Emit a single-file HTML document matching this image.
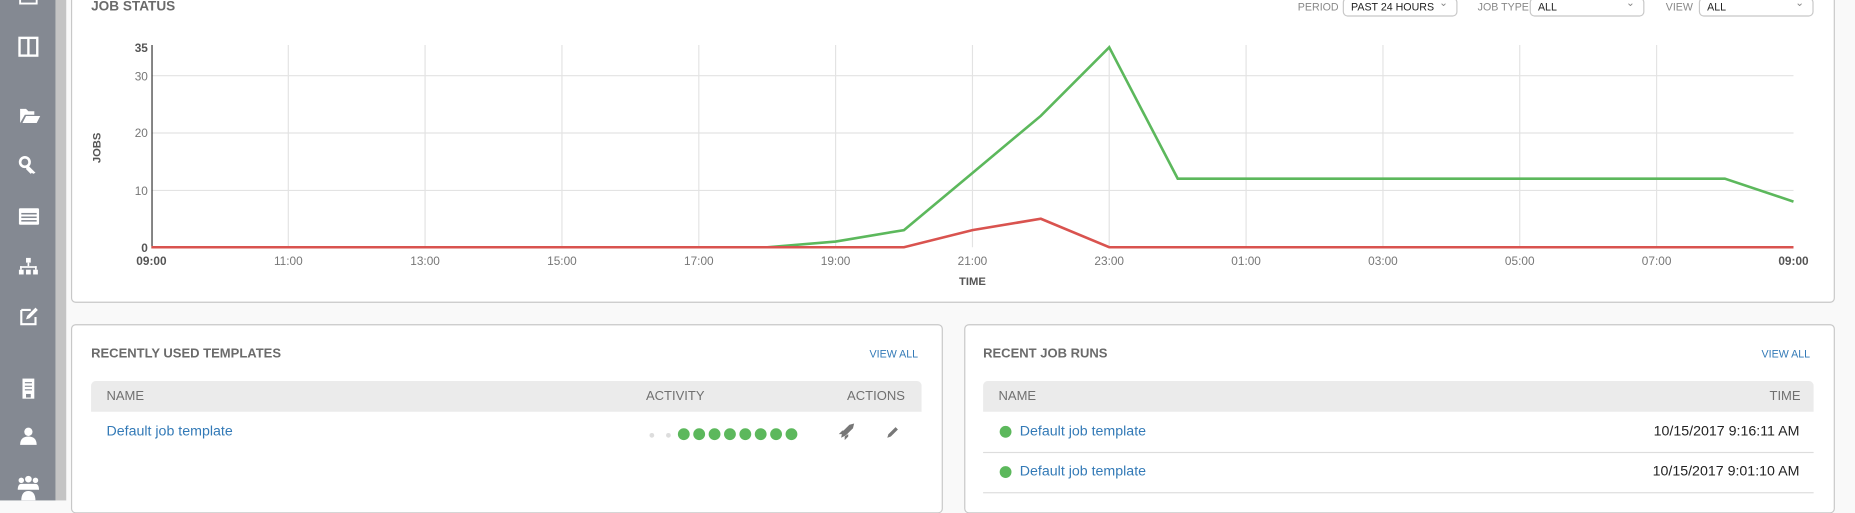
<!DOCTYPE html>
<html><head><meta charset="utf-8"><style>
*{box-sizing:border-box;margin:0;padding:0}
body{width:1855px;height:500px;overflow:hidden;background:#f9f9f9;font-family:"Liberation Sans",sans-serif}
#w{width:1568px;height:423px;transform:scale(1.18304);transform-origin:0 0;position:relative}
.sb{position:absolute;left:0;top:0;width:47px;height:423px;background:#848992}
.strip{position:absolute;left:47px;top:0;width:9px;height:423px;background:#c4c4c4}
.panel{position:absolute;background:#fff;border:1px solid #c8c8c8;border-radius:4px}
.t{position:absolute;font-size:11px;font-weight:bold;color:#6b6b6b}
.va{position:absolute;font-size:9px;color:#337ab7}
.hdr{position:absolute;background:#ebebeb;height:26px;border-radius:4px 4px 0 0;font-size:11px;color:#707070}
.hdr span{position:absolute;top:7px}
.lk{position:absolute;font-size:12px;color:#337ab7}
.sel{position:absolute;top:-2px;height:16px;border:1px solid #c8c8c8;border-radius:4px;font-size:9px;color:#222;padding:2px 0 0 6px;background:#fff}
.sel:after{content:"⌄";position:absolute;right:7px;top:-2px;color:#888;font-size:9px}
.lb{position:absolute;top:1px;font-size:9px;color:#888}
.dot{display:inline-block;width:10px;height:10px;border-radius:50%;background:#5cb85c;margin-right:3px}
</style></head><body><div id="w">
<div class="sb"></div><div class="strip"></div>
<svg style="position:absolute;left:0;top:0" width="47" height="423" fill="#fff">
<rect x="17" y="-6" width="14" height="9" fill="none" stroke="#fff" stroke-width="1.6"/>
<rect x="16.5" y="32" width="15" height="15" fill="none" stroke="#fff" stroke-width="2"/><rect x="23" y="32" width="2" height="15"/>
<path d="M17 104V92h5l2 2h5v3h-8l-4 7zM19 104l3-6h12l-3 6z"/>
<circle cx="21" cy="137" r="4" fill="none" stroke="#fff" stroke-width="2.2"/><path d="M23 139l7 7-2 1-1-1-1 1-1-1-3-3z"/>
<rect x="16" y="176" width="17" height="14" rx="1"/><g fill="#848992"><rect x="18" y="180" width="13" height="1.3"/><rect x="18" y="183" width="13" height="1.3"/><rect x="18" y="186" width="13" height="1.3"/></g>
<rect x="22" y="218" width="4" height="4"/><rect x="23.3" y="222" width="1.4" height="3"/><rect x="17" y="225" width="14" height="1.4"/><rect x="17" y="225" width="1.4" height="3"/><rect x="29.6" y="225" width="1.4" height="3"/><rect x="16" y="228" width="4" height="4"/><rect x="22" y="228" width="4" height="4"/><rect x="28" y="228" width="4" height="4"/>
<path d="M18 262h8M18 262v12h12v-6" fill="none" stroke="#fff" stroke-width="1.8"/><path d="M22 270l1-3 7-7 2 2-7 7z"/>
<rect x="19" y="320" width="10" height="17"/><g fill="#848992"><rect x="21" y="323" width="6" height="1"/><rect x="21" y="326" width="6" height="1"/><rect x="21" y="329" width="6" height="1"/><rect x="22" y="333" width="4" height="3"/></g>
<circle cx="24" cy="365" r="3.5"/><path d="M17 376c0-5 3-7 7-7s7 2 7 7z"/>
<circle cx="18" cy="406" r="2.3"/><circle cx="30" cy="406" r="2.3"/><circle cx="24" cy="405" r="2.8"/><path d="M15 414c0-3 1-5 3-5h12c2 0 3 2 3 5zM18 423c0-5 2-8 6-8s6 3 6 8z"/>
</svg>

<div class="panel" style="left:60px;top:-10px;width:1491px;height:266px"></div>
<div class="t" style="left:77px;top:0px;font-size:11.5px">JOB STATUS</div>
<span class="lb" style="left:1097px">PERIOD</span><div class="sel" style="left:1135px;width:97px">PAST 24 HOURS</div>
<span class="lb" style="left:1249px">JOB TYPE</span><div class="sel" style="left:1293px;width:97px">ALL</div>
<span class="lb" style="left:1408px">VIEW</span><div class="sel" style="left:1436px;width:97px">ALL</div>

<svg style="position:absolute;left:0;top:0" width="1568" height="260" font-family="Liberation Sans, sans-serif">
<g stroke="#e3e3e3" stroke-width="1">
<line x1="128" y1="64" x2="1516" y2="64"/><line x1="128" y1="112.4" x2="1516" y2="112.4"/><line x1="128" y1="161" x2="1516" y2="161"/>
<line x1="243.7" y1="38" x2="243.7" y2="209"/><line x1="359.3" y1="38" x2="359.3" y2="209"/><line x1="475" y1="38" x2="475" y2="209"/><line x1="590.7" y1="38" x2="590.7" y2="209"/><line x1="706.3" y1="38" x2="706.3" y2="209"/><line x1="822" y1="38" x2="822" y2="209"/><line x1="937.6" y1="38" x2="937.6" y2="209"/><line x1="1053.3" y1="38" x2="1053.3" y2="209"/><line x1="1169" y1="38" x2="1169" y2="209"/><line x1="1284.6" y1="38" x2="1284.6" y2="209"/><line x1="1400.3" y1="38" x2="1400.3" y2="209"/>
</g>
<line x1="128.5" y1="38" x2="128.5" y2="210" stroke="#333"/>
<polyline fill="none" stroke="#5cb85c" stroke-width="2.2" points="128,209 648.5,209 706.3,204.2 764.1,194.5 822,146.2 879.8,97.9 937.6,40 995.5,151 1458,151 1516,170.4"/>
<polyline fill="none" stroke="#d9534f" stroke-width="2.2" points="128,209 764.1,209 822,194.5 879.8,184.9 937.6,209 1516,209"/>
<g font-size="10" fill="#777" text-anchor="end">
<text x="125" y="44" font-weight="bold" fill="#555">35</text><text x="125" y="68">30</text><text x="125" y="116">20</text><text x="125" y="165">10</text><text x="125" y="213" font-weight="bold" fill="#555">0</text></g>
<g font-size="10" fill="#777" text-anchor="middle">
<text x="128" y="224" font-weight="bold" fill="#555">09:00</text><text x="243.7" y="224">11:00</text><text x="359.3" y="224">13:00</text><text x="475" y="224">15:00</text><text x="590.7" y="224">17:00</text><text x="706.3" y="224">19:00</text><text x="822" y="224">21:00</text><text x="937.6" y="224">23:00</text><text x="1053.3" y="224">01:00</text><text x="1169" y="224">03:00</text><text x="1284.6" y="224">05:00</text><text x="1400.3" y="224">07:00</text><text x="1516" y="224" font-weight="bold" fill="#555">09:00</text>
<text x="822" y="241" font-weight="bold" fill="#555" font-size="9.5">TIME</text></g>
<text transform="translate(85,125) rotate(-90)" font-size="9.5" font-weight="bold" fill="#555" text-anchor="middle">JOBS</text>
</svg>

<div class="panel" style="left:60px;top:274px;width:737px;height:160px"></div>
<div class="t" style="left:77px;top:293px">RECENTLY USED TEMPLATES</div>
<div class="va" style="left:735px;top:294px">VIEW ALL</div>
<div class="hdr" style="left:77px;top:322px;width:702px"><span style="left:13px">NAME</span><span style="left:469px">ACTIVITY</span><span style="left:639px">ACTIONS</span></div>
<div class="lk" style="left:90px;top:357px">Default job template</div>
<div style="position:absolute;left:549px;top:359px"><span style="display:inline-block;width:4px;height:4px;border-radius:50%;background:#ddd;margin:0 10px 2px 0"></span><span style="display:inline-block;width:4px;height:4px;border-radius:50%;background:#ddd;margin:0 6px 2px 0"></span><span class="dot"></span><span class="dot"></span><span class="dot"></span><span class="dot"></span><span class="dot"></span><span class="dot"></span><span class="dot"></span><span class="dot"></span></div>
<svg style="position:absolute;left:706px;top:356px" width="60" height="18" fill="#777"><path d="M5 14l1-5 6-6 4-1-1 4-6 6z"/><path d="M3 11l3-3 2 0-2 3zM8 16l3-3 0-2-3 2z"/><path d="M44 14l1-3 6-6 2 2-6 6z"/></svg>

<div class="panel" style="left:815px;top:274px;width:736px;height:160px"></div>
<div class="t" style="left:831px;top:293px">RECENT JOB RUNS</div>
<div class="va" style="left:1489px;top:294px">VIEW ALL</div>
<div class="hdr" style="left:831px;top:322px;width:702px"><span style="left:13px">NAME</span><span style="right:11px">TIME</span></div>
<div style="position:absolute;left:831px;top:382px;width:702px;height:1px;background:#ddd"></div>
<div style="position:absolute;left:831px;top:416px;width:702px;height:1px;background:#ddd"></div>
<span class="dot" style="position:absolute;left:845px;top:360px"></span>
<div class="lk" style="left:862px;top:357px">Default job template</div>
<div style="position:absolute;right:47px;top:357px;font-size:12px;color:#222">10/15/2017 9:16:11 AM</div>
<span class="dot" style="position:absolute;left:845px;top:394px"></span>
<div class="lk" style="left:862px;top:391px">Default job template</div>
<div style="position:absolute;right:47px;top:391px;font-size:12px;color:#222">10/15/2017 9:01:10 AM</div>
</div></body></html>
